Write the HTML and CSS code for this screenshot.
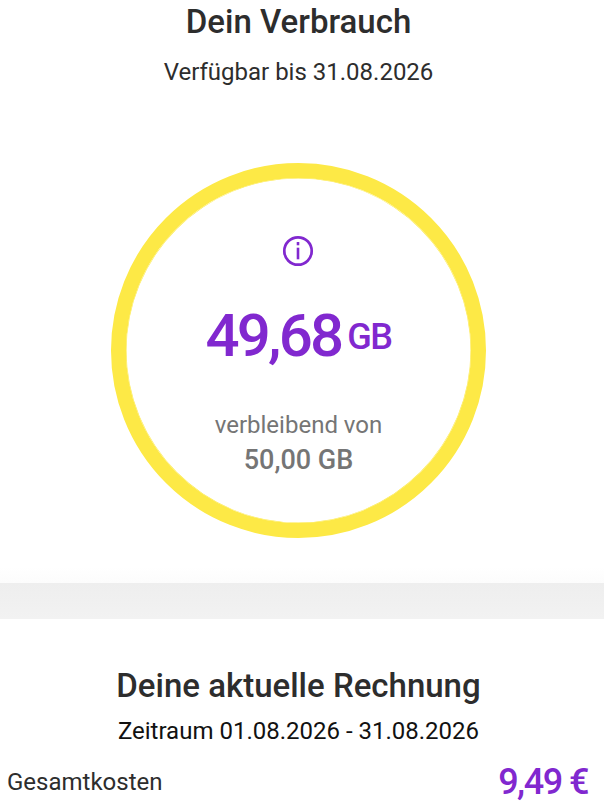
FILE: index.html
```html
<!DOCTYPE html>
<html lang="de">
<head>
<meta charset="utf-8">
<title>Dein Verbrauch</title>
<link rel="stylesheet" href="styles.css">
</head>
<body>
<section class="usage">
  <h1 class="title">Dein Verbrauch</h1>
  <p class="subtitle">Verfügbar bis 31.08.2026</p>
  <div class="ring">
    <svg class="info" width="32" height="32" viewBox="0 0 32 32" aria-hidden="true">
      <circle cx="16" cy="16" r="13.7" fill="none" stroke="#8128cf" stroke-width="2.7"/>
      <rect x="14.7" y="12.7" width="2.6" height="11.6" fill="#8128cf"/>
      <rect x="14.7" y="7" width="2.6" height="3.3" fill="#8128cf"/>
    </svg>
    <div class="amount"><span class="value">49,68</span><span class="unit">GB</span></div>
    <div class="remaining">verbleibend von</div>
    <div class="total">50,00 GB</div>
  </div>
</section>
<div class="divider"></div>
<section class="bill">
  <h2 class="bill-title">Deine aktuelle Rechnung</h2>
  <p class="period">Zeitraum 01.08.2026 - 31.08.2026</p>
  <div class="cost-row">
    <span class="cost-label">Gesamtkosten</span>
    <span class="cost-value">9,49 €</span>
  </div>
</section>
</body>
</html>
```
FILE: styles.css
```css
* { box-sizing: border-box; }
html, body { margin: 0; padding: 0; }
body {
  width: 604px;
  height: 805px;
  overflow: hidden;
  background: #fff;
  font-family: Roboto, "Liberation Sans", sans-serif;
  color: #2d2d2d;
}
.usage {
  display: flex;
  flex-direction: column;
  align-items: center;
  height: 583px;
  padding-top: 2px;
  padding-right: 7px;
  background: linear-gradient(to bottom, #fff calc(100% - 16px), #fcfcfc);
}
.title {
  margin: 0;
  font-size: 33px;
  line-height: 40px;
  font-weight: 500;
}
.subtitle {
  margin: 14px 0 0;
  font-size: 24px;
  line-height: 32px;
  font-weight: 400;
}
.ring {
  margin-top: 75px;
  width: 375px;
  height: 375px;
  border: 15px solid #fde946;
  box-shadow: inset 0 0 0 0.5px #fde946;
  border-radius: 50%;
  display: flex;
  flex-direction: column;
  align-items: center;
}
.info { margin: 57px 1px 0 0; }
.amount {
  margin-top: 31px;
  color: #8128cf;
  font-weight: 500;
  line-height: 76px;
  white-space: nowrap;
}
.value { font-size: 60px; letter-spacing: -2.8px; }
.unit { margin-left: 6px; font-size: 36px; letter-spacing: -1.5px; vertical-align: 7px; }
.remaining {
  margin-top: 20px;
  font-size: 24px;
  line-height: 32px;
  color: #757575;
}
.total {
  margin-top: 3px;
  font-size: 27px;
  line-height: 32px;
  font-weight: 500;
  color: #757575;
}
.divider { height: 36px; background: linear-gradient(to bottom, #eeeeee, #f2f2f2); }
.bill { padding: 46px 14px 0 7px; }
.bill-title {
  margin: 0;
  text-align: center;
  font-size: 33px;
  line-height: 42px;
  font-weight: 500;
}
.period {
  margin: 8px 0 0;
  text-align: center;
  font-size: 24px;
  line-height: 32px;
  color: #111;
}
.cost-row {
  display: flex;
  justify-content: space-between;
  align-items: center;
  margin: 14px 2px 0 0;
}
.cost-label { font-size: 24px; }
.cost-value { font-size: 36px; font-weight: 500; letter-spacing: -1.5px; color: #8128cf; line-height: 42px; }
```
